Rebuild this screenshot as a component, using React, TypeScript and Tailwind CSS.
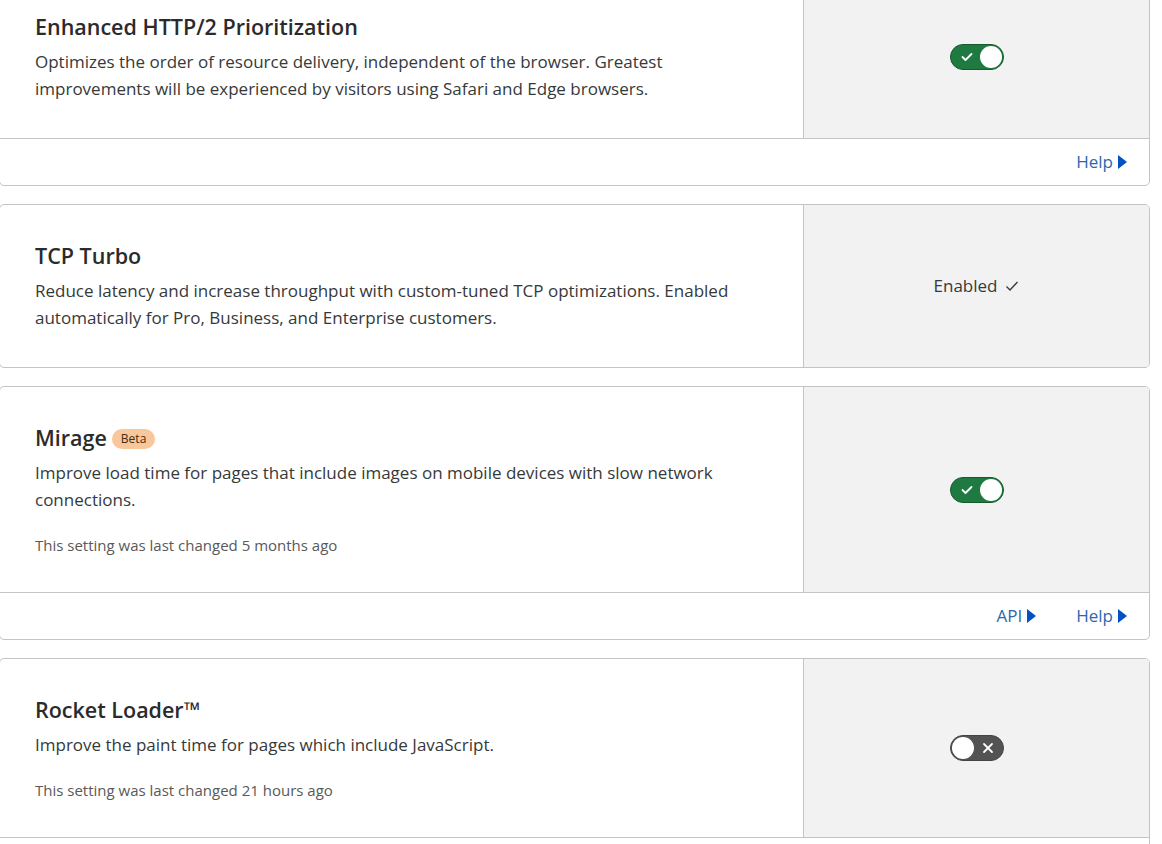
import React from "react"

const font = { fontFamily: '"Segoe UI", "Open Sans", "Noto Sans", sans-serif' }

function Caret() {
  return (
    <svg width="9" height="14" viewBox="0 0 9 14" className="ml-[5px]">
      <path d="M0 0 L9 7 L0 14 Z" fill="#0051c3" />
    </svg>
  )
}

function Toggle({ on }: { on: boolean }) {
  if (on) {
    return (
      <div className="relative w-[54px] h-[26px] rounded-full bg-[#1f7a41] border border-[#165a30]">
        <svg width="12" height="10" viewBox="0 0 12 10" className="absolute left-[10px] top-[7px]">
          <path d="M1.5 5 L4.5 8 L10.5 2" stroke="#fff" strokeWidth="1.8" fill="none" strokeLinecap="round" strokeLinejoin="round" />
        </svg>
        <div className="absolute right-[1px] top-[1px] w-[22px] h-[22px] rounded-full bg-white" />
      </div>
    )
  }
  return (
    <div className="relative w-[54px] h-[26px] rounded-full bg-[#535353] border border-[#444]">
      <div className="absolute left-[1px] top-[1px] w-[22px] h-[22px] rounded-full bg-white" />
      <svg width="12" height="12" viewBox="0 0 12 12" className="absolute right-[9px] top-[6px]">
        <path d="M2 2 L10 10 M10 2 L2 10" stroke="#fff" strokeWidth="1.8" strokeLinecap="round" />
      </svg>
    </div>
  )
}

function Enabled() {
  return (
    <div className="flex items-center gap-[8px] text-[17px] text-[#36393a]">
      <span>Enabled</span>
      <svg width="14" height="12" viewBox="0 0 14 12">
        <path d="M1.5 6.5 L5 10 L12.5 2" stroke="#36393a" strokeWidth="1.4" fill="none" />
      </svg>
    </div>
  )
}

type Card = {
  title: string
  beta?: boolean
  desc: string
  changed?: string
  control: React.ReactNode
  links?: string[]
}

const cards: Card[] = [
  {
    title: "Enhanced HTTP/2 Prioritization",
    desc: "Optimizes the order of resource delivery, independent of the browser. Greatest improvements will be experienced by visitors using Safari and Edge browsers.",
    control: <Toggle on />,
    links: ["Help"],
  },
  {
    title: "TCP Turbo",
    desc: "Reduce latency and increase throughput with custom-tuned TCP optimizations. Enabled automatically for Pro, Business, and Enterprise customers.",
    control: <Enabled />,
  },
  {
    title: "Mirage",
    beta: true,
    desc: "Improve load time for pages that include images on mobile devices with slow network connections.",
    changed: "This setting was last changed 5 months ago",
    control: <Toggle on />,
    links: ["API", "Help"],
  },
  {
    title: "Rocket Loader™",
    desc: "Improve the paint time for pages which include JavaScript.",
    changed: "This setting was last changed 21 hours ago",
    control: <Toggle on={false} />,
    // footer row continues below the fold
    links: [],
  },
]

export default function App() {
  return (
    <div className="w-[1162px] h-[844px] overflow-hidden bg-white" style={font}>
      <div className="-mt-[25px] -ml-px w-[1151px] flex flex-col gap-[18px]">
        {cards.map((c) => (
          <div key={c.title} className="border border-[#c4c4c4] rounded-[5px] overflow-hidden bg-white">
            <div className="flex">
              <div className="flex-1 pl-[35px] pr-[50px] py-9">
                <div className="flex items-center gap-[5px] h-[30px]">
                  <h3 className="text-[21.5px] font-semibold text-[#2b2b2b] leading-[30px]">{c.title}</h3>
                  {c.beta && (
                    <span className="px-[9px] h-[20px] mt-[2px] rounded-full bg-[#f9c79c] text-[#4a2a10] text-[12px] leading-[20px]">
                      Beta
                    </span>
                  )}
                </div>
                <p className="mt-[6px] text-[17px] leading-[27px] text-[#36393a]">{c.desc}</p>
                {c.changed && (
                  <p className="mt-[22px] text-[15px] leading-[21px] text-[#595959]">{c.changed}</p>
                )}
              </div>
              <div className="w-[346px] shrink-0 border-l border-[#c4c4c4] bg-[#f2f2f2] flex items-center justify-center">
                {c.control}
              </div>
            </div>
            {c.links && (
              <div className="h-[47px] border-t border-[#c4c4c4] flex items-center justify-end gap-10 pr-[22px]">
                {c.links.map((l) => (
                  <a key={l} className="flex items-center text-[17px] text-[#2c68ad]">
                    {l}
                    <Caret />
                  </a>
                ))}
              </div>
            )}
          </div>
        ))}
      </div>
    </div>
  )
}
